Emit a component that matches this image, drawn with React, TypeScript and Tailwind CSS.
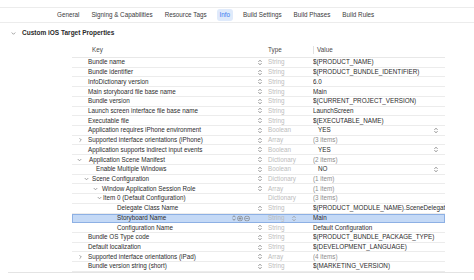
const tabs = ["General", "Signing & Capabilities", "Resource Tags", "Info", "Build Settings", "Build Phases", "Build Rules"];

type Row = {
  key: string;
  indent: number;
  chevron?: "open" | "closed";
  chevronAt?: number;
  type: string;
  value: string;
  stepper?: boolean;
  bool?: boolean;
  muted?: boolean;
  selected?: boolean;
};

const rows: Row[] = [
  { key: "Bundle name", indent: 16, type: "String", value: "$(PRODUCT_NAME)", stepper: true },
  { key: "Bundle identifier", indent: 16, type: "String", value: "$(PRODUCT_BUNDLE_IDENTIFIER)", stepper: true },
  { key: "InfoDictionary version", indent: 16, type: "String", value: "6.0", stepper: true },
  { key: "Main storyboard file base name", indent: 16, type: "String", value: "Main", stepper: true },
  { key: "Bundle version", indent: 16, type: "String", value: "$(CURRENT_PROJECT_VERSION)", stepper: true },
  { key: "Launch screen interface file base name", indent: 16, type: "String", value: "LaunchScreen", stepper: true },
  { key: "Executable file", indent: 16, type: "String", value: "$(EXECUTABLE_NAME)", stepper: true },
  { key: "Application requires iPhone environment", indent: 16, type: "Boolean", value: "YES", stepper: true, bool: true },
  { key: "Supported interface orientations (iPhone)", indent: 16, chevron: "closed", chevronAt: 6, type: "Array", value: "(3 items)", stepper: true, muted: true },
  { key: "Application supports indirect input events", indent: 16, type: "Boolean", value: "YES", stepper: true, bool: true },
  { key: "Application Scene Manifest", indent: 17, chevron: "open", chevronAt: 5, type: "Dictionary", value: "(2 items)", stepper: true, muted: true },
  { key: "Enable Multiple Windows", indent: 24, type: "Boolean", value: "NO", stepper: true, bool: true },
  { key: "Scene Configuration", indent: 20, chevron: "open", chevronAt: 12, type: "Dictionary", value: "(1 item)", stepper: true, muted: true },
  { key: "Window Application Session Role", indent: 30, chevron: "open", chevronAt: 21, type: "Array", value: "(1 item)", stepper: true, muted: true },
  { key: "Item 0 (Default Configuration)", indent: 31, chevron: "open", chevronAt: 25, type: "Dictionary", value: "(3 items)", muted: true },
  { key: "Delegate Class Name", indent: 45, type: "String", value: "$(PRODUCT_MODULE_NAME).SceneDelegat", stepper: true },
  { key: "Storyboard Name", indent: 45, type: "String", value: "Main", selected: true },
  { key: "Configuration Name", indent: 45, type: "String", value: "Default Configuration", stepper: true },
  { key: "Bundle OS Type code", indent: 16, type: "String", value: "$(PRODUCT_BUNDLE_PACKAGE_TYPE)", stepper: true },
  { key: "Default localization", indent: 16, type: "String", value: "$(DEVELOPMENT_LANGUAGE)", stepper: true },
  { key: "Supported interface orientations (iPad)", indent: 16, chevron: "closed", chevronAt: 6, type: "Array", value: "(4 items)", stepper: true, muted: true },
  { key: "Bundle version string (short)", indent: 16, type: "String", value: "$(MARKETING_VERSION)", stepper: true },
];

function Stepper({ color = "#7a7a7a" }: { color?: string }) {
  return (
    <svg width="4" height="7" viewBox="0 0 4 7" fill="none" stroke={color} strokeWidth="0.8" strokeLinecap="round" strokeLinejoin="round">
      <path d="M0.7 2.6 L2 1.2 L3.3 2.6" />
      <path d="M0.7 4.4 L2 5.8 L3.3 4.4" />
    </svg>
  );
}

function Chevron({ open }: { open: boolean }) {
  return (
    <svg width="5" height="5" viewBox="0 0 5 5" fill="none" stroke="#8a8a8a" strokeWidth="0.8" strokeLinecap="round" strokeLinejoin="round">
      {open ? <path d="M1 1.8 L2.5 3.3 L4 1.8" /> : <path d="M1.8 1 L3.3 2.5 L1.8 4" />}
    </svg>
  );
}

function CircleIcon({ plus }: { plus: boolean }) {
  return (
    <svg width="6" height="6" viewBox="0 0 6 6" fill="none" stroke="#7c7c7c" strokeWidth="0.7">
      <circle cx="3" cy="3" r="2.5" />
      <path d="M1.5 3 H4.5" />
      {plus && <path d="M3 1.5 V4.5" />}
    </svg>
  );
}

export default function App() {
  return (
    <div className="w-[474px] h-[280px] bg-white overflow-hidden text-[#2c2c2c] font-['Liberation_Sans',Arial,sans-serif] text-[6.3px] leading-[8px]">
      {/* Tab bar */}
      <div className="h-[7px] bg-white" />
      <div className="h-[16px] border-t border-b border-[#ececec] flex items-center pl-[57px] gap-[12px]">
        {tabs.map((t) =>
          t === "Info" ? (
            <span key={t} className="px-[3px] py-[2px] rounded-[3px] bg-[#dfeafb] text-[#3b7cf0] -mx-[2px]">
              {t}
            </span>
          ) : (
            <span key={t} className="text-[#3a3a3a]">
              {t}
            </span>
          )
        )}
      </div>

      {/* Section header */}
      <div className="h-[20px] flex items-center pl-[11px] gap-[6px]">
        <Chevron open />
        <span className="font-bold text-[6.5px] text-[#2a2a2a]">Custom iOS Target Properties</span>
      </div>

      {/* Table */}
      <div className="ml-[72px] w-[373px]">
        <div className="h-[15px] flex items-center border-b border-[#e8e8e8]">
          <div className="w-[196px] pl-[20px] text-[#4a4a4a]">Key</div>
          <div className="w-[45px] text-[#4a4a4a]">Type</div>
          <div className="flex-1 pl-[3px] border-l border-[#e2e2e2] text-[#4a4a4a]">Value</div>
        </div>
        {rows.map((r) => (
          <div
            key={r.key}
            className={
              "h-[9.73px] flex items-center " +
              (r.selected ? "bg-[#c4d9f6] outline outline-1 outline-[#8db0e4] -outline-offset-1" : "border-b border-[#ececec]")
            }
          >
            <div className="w-[184px] relative h-full flex items-center">
              {r.chevron && (
                <span className="absolute top-1/2 -translate-y-1/2" style={{ left: r.chevronAt }}>
                  <Chevron open={r.chevron === "open"} />
                </span>
              )}
              <span className="whitespace-nowrap" style={{ paddingLeft: r.indent }}>
                {r.key}
              </span>
              {r.selected && (
                <span className="absolute right-[6px] top-1/2 -translate-y-1/2 flex items-center gap-[1px]">
                  <Stepper />
                  <CircleIcon plus />
                  <CircleIcon plus={false} />
                </span>
              )}
            </div>
            <div className="w-[12px] pl-[2px] flex items-center">{r.stepper && <Stepper />}</div>
            <div className="w-[45px] text-[#bcbcbc] flex items-center">
              <span className="w-[24px]">{r.type}</span>
              {r.selected && <Stepper color="#9a9a9a" />}
            </div>
            <div className="flex-1 flex items-center pr-[7px] whitespace-nowrap overflow-hidden">
              {r.bool ? (
                <>
                  <span className="pl-[5px] flex-1">{r.value}</span>
                  <Stepper />
                </>
              ) : (
                <span className={r.muted ? "text-[#8c8c8c]" : ""}>{r.value}</span>
              )}
            </div>
          </div>
        ))}
      </div>
      <div className="ml-[8px] border-t border-[#e4e4e4]" />
    </div>
  );
}
